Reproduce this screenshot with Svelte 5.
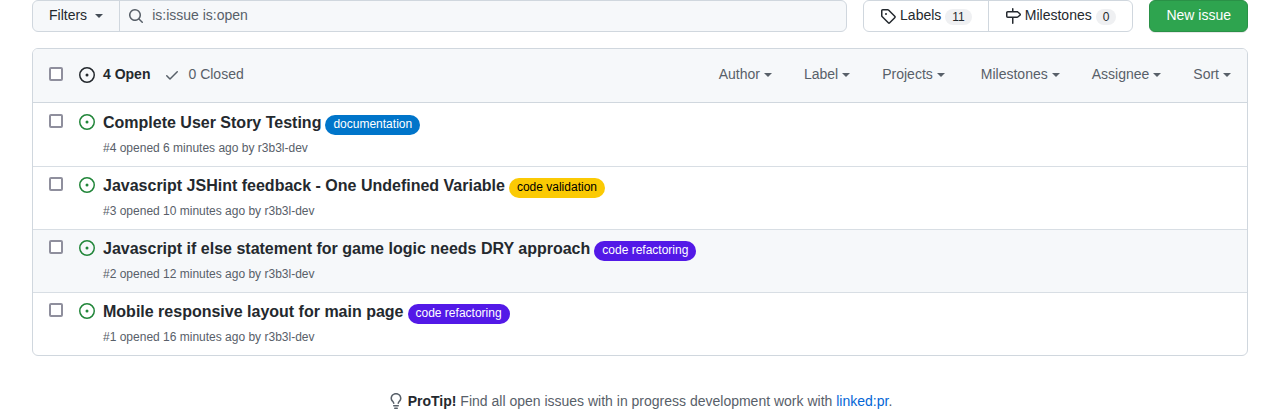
<script>
  const menus = ['Author', 'Label', 'Projects', 'Milestones', 'Assignee', 'Sort'];
  const issues = [
    { id: 4, title: 'Complete User Story Testing', age: '6 minutes', label: 'documentation', tone: 'blue' },
    { id: 3, title: 'Javascript JSHint feedback - One Undefined Variable', age: '10 minutes', label: 'code validation', tone: 'yellow' },
    { id: 2, title: 'Javascript if else statement for game logic needs DRY approach', age: '12 minutes', label: 'code refactoring', tone: 'purple', active: true },
    { id: 1, title: 'Mobile responsive layout for main page', age: '16 minutes', label: 'code refactoring', tone: 'purple' }
  ];
</script>

{#snippet openIcon()}
  <svg class="icon" viewBox="0 0 16 16" aria-hidden="true"><path d="M8 9.5a1.5 1.5 0 100-3 1.5 1.5 0 000 3z" /><path fill-rule="evenodd" d="M8 0a8 8 0 100 16A8 8 0 008 0zM1.5 8a6.5 6.5 0 1113 0 6.5 6.5 0 01-13 0z" /></svg>
{/snippet}

<main>
  <div class="toolbar">
    <form class="search" onsubmit={(e) => e.preventDefault()}>
      <button type="button" class="filters">Filters <span class="caret"></span></button>
      <div class="query">
        <svg class="icon" viewBox="0 0 16 16" aria-hidden="true"><path fill-rule="evenodd" d="M11.5 7a4.499 4.499 0 11-8.998 0A4.499 4.499 0 0111.5 7zm-.82 4.74a6 6 0 111.06-1.06l3.04 3.04a.75.75 0 11-1.06 1.06l-3.04-3.04z" /></svg>
        <input type="text" value="is:issue is:open" aria-label="Search all issues" />
      </div>
    </form>
    <nav class="links" aria-label="Issue">
      <a href="#labels">
        <svg class="icon" viewBox="0 0 16 16" aria-hidden="true"><path fill-rule="evenodd" d="M2.5 7.775V2.75a.25.25 0 01.25-.25h5.025a.25.25 0 01.177.073l6.25 6.25a.25.25 0 010 .354l-5.025 5.025a.25.25 0 01-.354 0l-6.25-6.25a.25.25 0 01-.073-.177zm-1.5 0V2.75C1 1.784 1.784 1 2.75 1h5.025c.464 0 .91.184 1.238.513l6.25 6.25a1.75 1.75 0 010 2.474l-5.026 5.026a1.75 1.75 0 01-2.474 0l-6.25-6.25A1.75 1.75 0 011 7.775zM6 5a1 1 0 100 2 1 1 0 000-2z" /></svg>
        <span>Labels</span><span class="count">11</span>
      </a>
      <a href="#milestones">
        <svg class="icon" viewBox="0 0 16 16" aria-hidden="true"><path fill-rule="evenodd" d="M7.75 0a.75.75 0 01.75.75V3h3.634c.414 0 .814.147 1.13.414l2.07 1.75a1.75 1.75 0 010 2.672l-2.07 1.75a1.75 1.75 0 01-1.13.414H8.5v5.25a.75.75 0 11-1.5 0V10H2.75A1.75 1.75 0 011 8.25v-3.5C1 3.784 1.784 3 2.75 3H7V.75A.75.75 0 017.75 0zm0 8.5h4.384a.25.25 0 00.161-.06l2.07-1.75a.25.25 0 000-.38l-2.07-1.75a.25.25 0 00-.161-.06H2.75a.25.25 0 00-.25.25v3.5c0 .138.112.25.25.25h5z" /></svg>
        <span>Milestones</span><span class="count">0</span>
      </a>
    </nav>
    <button type="button" class="new">New issue</button>
  </div>

  <section class="box">
    <header>
      <input type="checkbox" aria-label="Select all issues" />
      <a class="state open" href="#open">{@render openIcon()}<span>4 Open</span></a>
      <a class="state" href="#closed">
        <svg class="icon" viewBox="0 0 16 16" aria-hidden="true"><path fill-rule="evenodd" d="M13.78 4.22a.75.75 0 010 1.06l-7.25 7.25a.75.75 0 01-1.06 0L2.22 9.28a.75.75 0 011.06-1.06L6 10.94l6.72-6.72a.75.75 0 011.06 0z" /></svg><span>0 Closed</span>
      </a>
      <div class="menus">
        {#each [menus.slice(0, 3), menus.slice(3)] as group}
          <div class="group">
            {#each group as menu}
              <button type="button"><span>{menu}</span><span class="caret"></span></button>
            {/each}
          </div>
        {/each}
      </div>
    </header>
    <ul>
      {#each issues as issue}
        <li class:active={issue.active}>
          <input type="checkbox" aria-label={issue.title} />
          <span class="status">{@render openIcon()}</span>
          <div class="body">
            <div class="headline">
              <a class="title" href="#issue-{issue.id}">{issue.title}</a>
              <a class="label {issue.tone}" href="#label-{issue.id}">{issue.label}</a>
            </div>
            <div class="meta">#{issue.id} opened {issue.age} ago by <a href="#author">r3b3l-dev</a></div>
          </div>
        </li>
      {/each}
    </ul>
  </section>

  <p class="tip">
    <svg class="icon" viewBox="0 0 16 16" aria-hidden="true"><path fill-rule="evenodd" d="M8 1.5c-2.363 0-4 1.69-4 3.75 0 .984.424 1.625.984 2.304l.214.253c.223.264.47.556.673.848.284.411.537.896.621 1.49a.75.75 0 01-1.484.211c-.04-.282-.163-.547-.37-.847a8.695 8.695 0 00-.542-.68c-.084-.1-.173-.205-.268-.32C3.201 7.75 2.5 6.766 2.5 5.25 2.5 2.31 4.863 0 8 0s5.5 2.31 5.5 5.25c0 1.516-.701 2.5-1.328 3.259-.095.115-.184.22-.268.319-.207.245-.383.453-.541.681-.208.3-.33.565-.37.847a.75.75 0 01-1.485-.212c.084-.593.337-1.078.621-1.489.203-.292.45-.584.673-.848.075-.088.147-.173.213-.253.561-.679.985-1.32.985-2.304 0-2.06-1.637-3.75-4-3.75zM6 15.25a.75.75 0 01.75-.75h2.5a.75.75 0 010 1.5h-2.5a.75.75 0 01-.75-.75zM5.75 12a.75.75 0 000 1.5h4.5a.75.75 0 000-1.5h-4.5z" /></svg>
    <span><strong>ProTip!</strong> Find all open issues with in progress development work with <a href="#linked">linked:pr</a>.</span>
  </p>
</main>

<style>
  :global(body) {
    margin: 0;
    background: #fff;
  }
  main {
    padding: 0 32px;
    font: 14px/20px "Liberation Sans", Arial, sans-serif;
    color: #24292e;
  }
  main * {
    box-sizing: border-box;
  }
  a {
    color: inherit;
    text-decoration: none;
  }
  button {
    font: inherit;
    color: inherit;
    cursor: pointer;
  }
  .icon {
    display: block;
    flex: none;
    width: 16px;
    height: 16px;
    fill: currentColor;
  }
  .caret {
    flex: none;
    border: 4px solid transparent;
    border-top-color: currentColor;
    border-bottom: 0;
  }
  .toolbar {
    display: flex;
    gap: 16px;
    margin-bottom: 16px;
  }
  .search {
    display: flex;
    flex: 1;
    height: 32px;
    background: #f6f8fa;
    border: 1px solid #d0d7de;
    border-radius: 6px;
    overflow: hidden;
  }
  .filters {
    display: flex;
    align-items: center;
    gap: 8px;
    padding: 0 16px 2px;
    border: 0;
    border-right: 1px solid #d0d7de;
    background: none;
  }
  .filters .caret {
    margin-top: 2px;
    color: #444d56;
  }
  .query {
    display: flex;
    flex: 1;
    align-items: center;
    gap: 8px;
    padding-left: 8px;
    color: #586069;
  }
  .query input {
    flex: 1;
    min-width: 0;
    height: 30px;
    padding: 0 0 2px;
    border: 0;
    outline: 0;
    background: none;
    font: inherit;
    color: inherit;
  }
  .links {
    display: flex;
    height: 32px;
    border: 1px solid #d0d7de;
    border-radius: 6px;
  }
  .links a {
    display: flex;
    align-items: center;
    gap: 4px;
    padding: 0 16px;
  }
  .links a + a {
    border-left: 1px solid #d0d7de;
  }
  .links span {
    margin-bottom: 2px;
  }
  .links .count {
    margin: 1px 0 0;
    padding: 0 7px;
    border-radius: 8px;
    background: #eff0f2;
    font-size: 12px;
    line-height: 16px;
  }
  .new {
    height: 32px;
    padding: 0 16px 2px;
    border: 1px solid #2a9147;
    border-radius: 6px;
    background: #2ea44f;
    color: #fff;
    box-shadow: 0 1px 0 rgba(27, 31, 35, 0.1);
  }
  .box {
    border: 1px solid #d0d7de;
    border-radius: 6px;
    overflow: hidden;
  }
  header {
    display: flex;
    align-items: center;
    height: 54px;
    padding: 0 16px 2px;
    border-bottom: 1px solid #d0d7de;
    background: #f6f8fa;
    color: #586069;
  }
  input[type="checkbox"] {
    appearance: none;
    flex: none;
    width: 14px;
    height: 14px;
    margin: 0;
    border: 2px solid #8f8f9d;
    border-radius: 2px;
    background: #fff;
  }
  header input[type="checkbox"] {
    margin: 0 16px 2px 0;
  }
  .state {
    display: flex;
    align-items: center;
    gap: 8px;
    margin-right: 14px;
  }
  .state span,
  .menus button span:first-child {
    margin-bottom: 2px;
  }
  .open {
    color: #24292e;
    font-weight: 700;
  }
  .menus {
    display: flex;
    gap: 36px;
    margin-left: auto;
  }
  .group {
    display: flex;
    gap: 32px;
  }
  .menus button {
    display: flex;
    align-items: center;
    gap: 4px;
    padding: 0;
    border: 0;
    background: none;
  }
  ul {
    margin: 0;
    padding: 0;
    list-style: none;
  }
  li {
    display: flex;
    align-items: flex-start;
    padding: 0 16px;
    border-top: 1px solid #d8dee4;
  }
  li:first-child {
    border-top-color: transparent;
  }
  li.active {
    background: #f6f8fa;
  }
  li input[type="checkbox"] {
    margin: 10px 16px 0 0;
  }
  .status {
    margin: 10px 8px 0 0;
    color: #22863a;
  }
  .body {
    flex: 1;
    min-width: 0;
    padding: 8px 0;
  }
  .headline {
    display: flex;
    align-items: flex-start;
    gap: 4px;
  }
  .title {
    font-size: 16px;
    line-height: 22px;
    font-weight: 700;
  }
  .label {
    margin-top: 3px;
    padding: 0 8px 2px;
    border-radius: 10px;
    font-size: 12px;
    line-height: 18px;
    white-space: nowrap;
  }
  .blue {
    background: #0075ca;
    color: #fff;
  }
  .yellow {
    background: #fbca04;
    color: #000;
  }
  .purple {
    background: #5319e7;
    color: #fff;
  }
  .meta {
    margin-top: 4px;
    padding-bottom: 1px;
    color: #586069;
    font-size: 12px;
    line-height: 18px;
  }
  .tip {
    display: flex;
    align-items: center;
    justify-content: center;
    gap: 4px;
    margin: 35px 0 0;
    color: #586069;
  }
  .tip strong {
    color: #24292e;
  }
  .tip a {
    color: #0366d6;
  }
</style>
